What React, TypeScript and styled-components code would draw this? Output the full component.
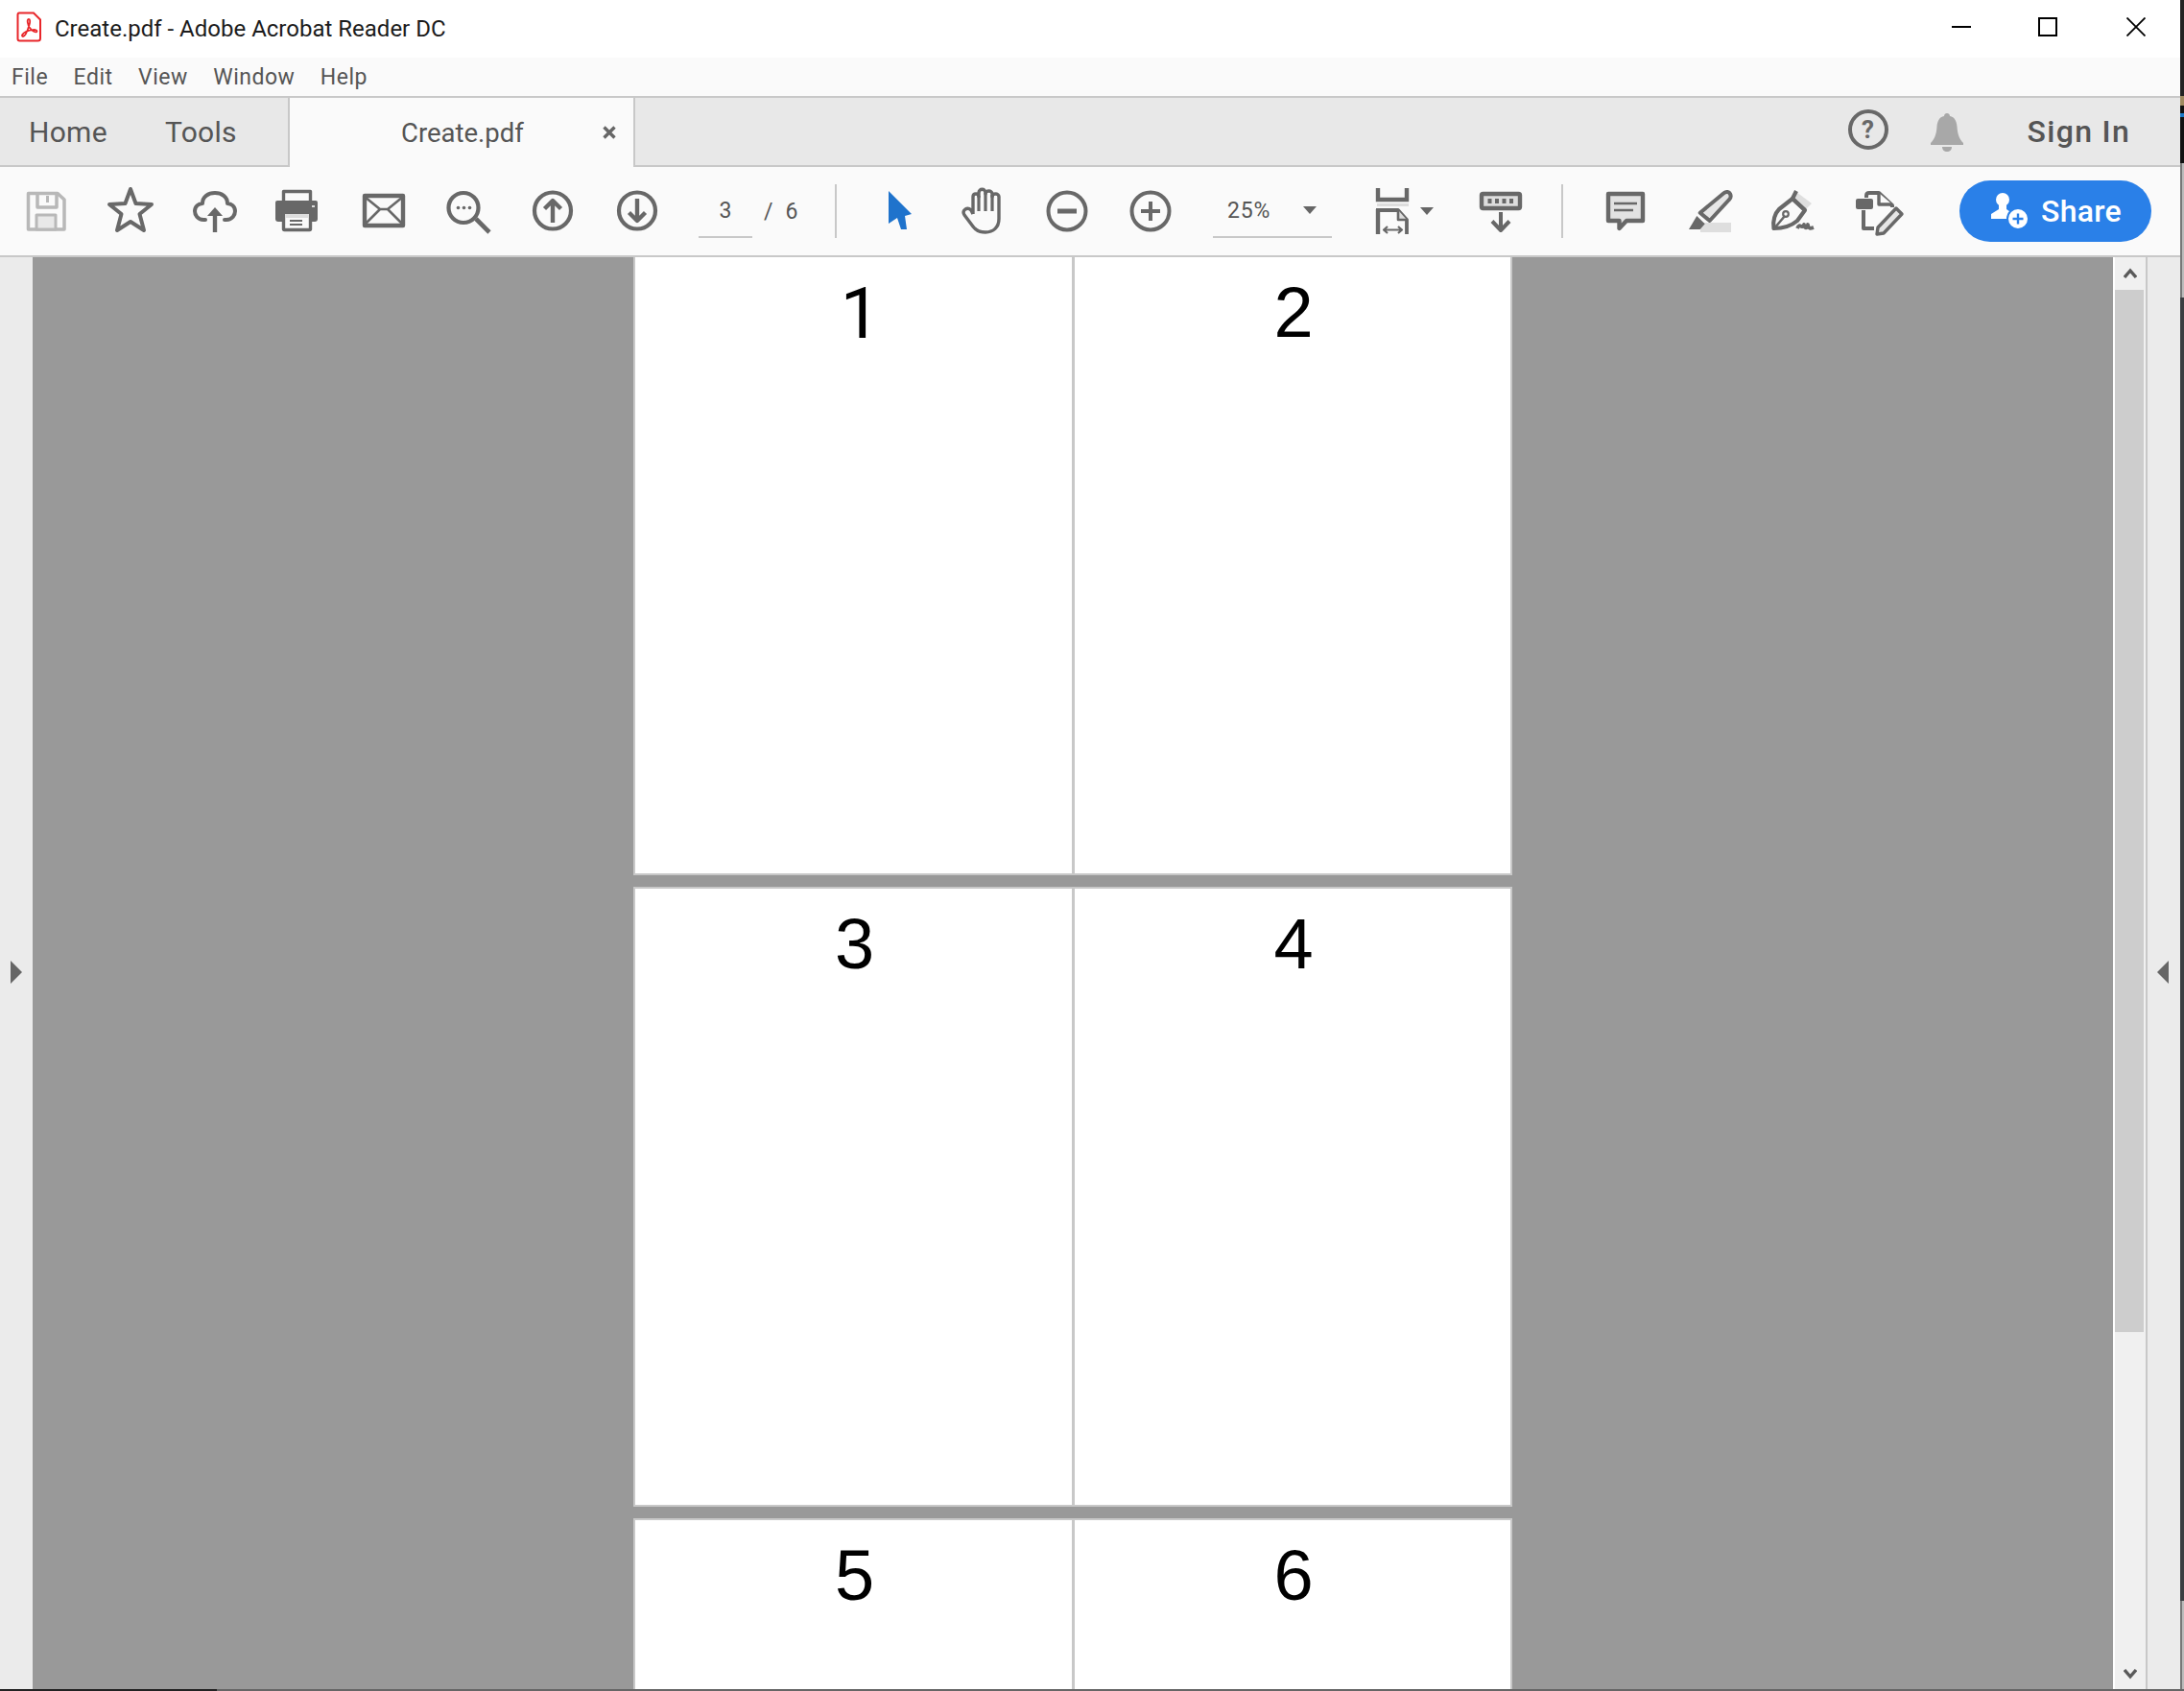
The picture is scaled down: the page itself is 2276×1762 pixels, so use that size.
import React from "react";
import styled, { createGlobalStyle } from "styled-components";

const Global = createGlobalStyle`
  html, body { margin: 0; padding: 0; background: #fff; }
  * { box-sizing: border-box; }
`;

const FONT = `Roboto, "Liberation Sans", sans-serif`;
const ICON = "#686868";

const Screen = styled.div`
  width: 2276px;
  height: 1762px;
  display: flex;
  flex-direction: column;
  overflow: hidden;
  font-family: ${FONT};
`;
const WindowRow = styled.div`
  flex: 1;
  min-height: 0;
  display: flex;
`;
const Main = styled.div`
  width: 2272px;
  display: flex;
  flex-direction: column;
`;
const EdgeStrip = styled.div`
  width: 4px;
  display: flex;
  flex-direction: column;
`;
const EdgeSegment = styled.div<{ $h?: number; $bg: string }>`
  height: ${(p) => (p.$h ? `${p.$h}px` : "auto")};
  flex: ${(p) => (p.$h ? "none" : 1)};
  background: ${(p) => p.$bg};
`;
const BottomLine = styled.div`
  height: 2px;
  flex: none;
  display: flex;
  background: #666;
`;
const BottomDark = styled.div`
  width: 226px;
  background: #222;
`;

const TitleBar = styled.div`
  height: 60px;
  flex: none;
  display: flex;
  align-items: center;
  background: #fff;
  padding-left: 16px;
`;
const LogoSlot = styled.div`
  display: flex;
  margin-bottom: 5px;
`;
const AppTitle = styled.div`
  flex: 1;
  margin-left: 11px;
  font-size: 24px;
  color: #1c1c1c;
`;
const WinButton = styled.div<{ $w: number }>`
  width: ${(p) => p.$w}px;
  height: 56px;
  margin-bottom: 4px;
  display: flex;
  align-items: center;
  justify-content: center;
`;

const MenuBar = styled.div`
  height: 40px;
  flex: none;
  display: flex;
  align-items: center;
  gap: 26.5px;
  padding-left: 12px;
  background: #fafafa;
`;
const MenuItem = styled.span`
  font-size: 23px;
  letter-spacing: 0.5px;
  color: #555;
`;

const TabBar = styled.div`
  height: 74px;
  flex: none;
  display: flex;
  background: #e8e8e8;
  border-top: 2px solid #c8c8c8;
  border-bottom: 2px solid #c8c8c8;
`;
const NavTabs = styled.div`
  width: 300px;
  display: flex;
  align-items: center;
  gap: 60px;
  padding-left: 30px;
`;
const NavTab = styled.span`
  font-size: 30px;
  letter-spacing: 0.3px;
  color: #555;
`;
const DocTab = styled.div`
  width: 362px;
  height: 72px;
  flex: none;
  display: flex;
  align-items: center;
  padding-left: 116px;
  background: #fafafa;
  border-left: 2px solid #c8c8c8;
  border-right: 2px solid #c8c8c8;
`;
const DocTabName = styled.span`
  width: 210px;
  font-size: 27.5px;
  color: #555;
`;
const TabSpacer = styled.div`
  flex: 1;
`;
const HelpBadge = styled.div`
  width: 42px;
  height: 42px;
  margin-top: 12px;
  border: 4px solid ${ICON};
  border-radius: 50%;
  display: flex;
  align-items: center;
  justify-content: center;
  font-size: 26px;
  font-weight: 700;
  color: ${ICON};
`;
const BellSlot = styled.div`
  margin: 14px 0 0 43px;
`;
const SignIn = styled.span`
  margin: 0 52px 0 66px;
  align-self: center;
  font-size: 32px;
  font-weight: 500;
  letter-spacing: 1.3px;
  color: #555;
`;

const Toolbar = styled.div`
  height: 94px;
  flex: none;
  display: flex;
  align-items: center;
  padding-left: 4px;
  background: #fafafa;
  border-bottom: 2px solid #c8c8c8;
`;
const Slot = styled.div<{ $w?: number; $ml?: number }>`
  width: ${(p) => p.$w ?? 88}px;
  margin-left: ${(p) => p.$ml ?? 0}px;
  flex: none;
  display: flex;
  align-items: center;
  justify-content: center;
`;
const PageField = styled.div`
  width: 162px;
  height: 56px;
  flex: none;
  display: flex;
  align-items: center;
  padding-left: 20px;
  font-size: 23px;
  color: #555;
`;
const PageInput = styled.div`
  width: 56px;
  height: 56px;
  padding-top: 1px;
  display: flex;
  align-items: center;
  justify-content: center;
  border-bottom: 2px solid #c8c8c8;
`;
const PageSlash = styled.span`
  margin-left: 12px;
`;
const PageTotal = styled.span`
  margin-left: 13px;
`;
const ToolDivider = styled.div<{ $ml?: number }>`
  width: 2px;
  height: 56px;
  flex: none;
  margin-left: ${(p) => p.$ml ?? 0}px;
  background: #c8c8c8;
`;
const ZoomBox = styled.div`
  width: 124px;
  height: 56px;
  flex: none;
  margin-left: 22px;
  display: flex;
  align-items: center;
  padding-left: 15px;
  font-size: 23px;
  color: #555;
  border-bottom: 2px solid #c8c8c8;
`;
const ZoomValue = styled.span`
  width: 79px;
  letter-spacing: 0.8px;
`;
const Caret = styled.span`
  width: 0;
  height: 0;
  flex: none;
  border-left: 7px solid transparent;
  border-right: 7px solid transparent;
  border-top: 8px solid #666;
`;
const FitGroup = styled.div`
  width: 88px;
  flex: none;
  margin-left: 44px;
  display: flex;
  align-items: center;
  gap: 8px;
`;
const ShareButton = styled.div`
  width: 200px;
  height: 64px;
  flex: none;
  margin-left: 38px;
  display: flex;
  align-items: center;
  padding-left: 32px;
  border-radius: 32px;
  background: #2a80e8;
  color: #fff;
  font-size: 32px;
  font-weight: 500;
`;
const ShareLabel = styled.span`
  margin-left: 11px;
  letter-spacing: 0.3px;
`;

const Workspace = styled.div`
  flex: 1;
  min-height: 0;
  display: flex;
`;
const SidePanel = styled.div<{ $w: number; $inset: number }>`
  width: ${(p) => p.$w}px;
  flex: none;
  display: flex;
  align-items: flex-start;
  justify-content: center;
  padding: 733px ${(p) => p.$inset}px 0 0;
  background: #ebebeb;
`;
const Canvas = styled.div`
  flex: 1;
  min-width: 0;
  overflow: hidden;
  display: flex;
  flex-direction: column;
  align-items: center;
  gap: 12px;
  background: #999;
`;
const Sheet = styled.div<{ $h: number; $first?: boolean; $last?: boolean }>`
  width: 916px;
  height: ${(p) => p.$h}px;
  flex: none;
  display: grid;
  grid-template-columns: 455px 1fr;
  background: #fff;
  border: 2px solid #c8c8c8;
  border-top-width: ${(p) => (p.$first ? 0 : 2)}px;
  border-bottom-width: ${(p) => (p.$last ? 0 : 2)}px;
`;
const Cell = styled.div<{ $divider?: boolean; $plain?: boolean }>`
  padding-top: ${(p) => (p.$plain ? 22 : 21)}px;
  padding-left: ${(p) => (p.$plain ? 14 : 2)}px;
  text-align: center;
  font-family: ${(p) => (p.$plain ? "Roboto, sans-serif" : `"Liberation Sans", Arial, sans-serif`)};
  font-size: 74px;
  line-height: 1;
  color: #000;
  border-left: ${(p) => (p.$divider ? "3px solid #c8c8c8" : "0")};
`;

const Scrollbar = styled.div`
  width: 36px;
  flex: none;
  display: flex;
  flex-direction: column;
  background: #f0f0f0;
  border-left: 2px solid #fff;
  border-right: 2px solid #c8c8c8;
`;
const ScrollArrow = styled.div<{ $h: number }>`
  height: ${(p) => p.$h}px;
  flex: none;
  display: flex;
  align-items: center;
  justify-content: center;
`;
const ScrollThumb = styled.div`
  width: 30px;
  height: 1086px;
  flex: none;
  background: #cdcdcd;
`;
const ScrollGap = styled.div`
  flex: 1;
`;

const Svg = ({ children, w = 56, h = 56 }: { children: React.ReactNode; w?: number; h?: number }) => (
  <svg width={w} height={h} viewBox={`0 0 ${w} ${h}`} fill="none" strokeLinejoin="round">
    {children}
  </svg>
);

const PdfLogo = () => (
  <svg width="30" height="34" viewBox="0 0 30 34" fill="none">
    <path d="M4 2.5 H19 L26 9.5 V29 Q26 31.5 23.5 31.5 H4.5 Q2.5 31.5 2.5 29.5 V4.5 Q2.5 2.5 4 2.5 Z" fill="#fff" stroke="#e8262a" strokeWidth="2" />
    <path d="M14 9 C11.5 9 13 15 15 18 C17 21 22 24 22.5 21.5 C23 19 15 20 11 22 C7 24 6 27 8 27 C10.5 27 13 20 14.5 15 C15.5 12 15.5 9 14 9 Z" stroke="#e8262a" strokeWidth="1.8" />
  </svg>
);

const SaveIcon = () => (
  <Svg>
    <path d="M9.5 9.5 H40 L47 16 V47 H9.5 Z" stroke="#b8b8b8" strokeWidth="3.5" />
    <path d="M19 9 V24 H39 V9" stroke="#b8b8b8" strokeWidth="3.5" />
    <rect x="28" y="12" width="3" height="7" fill="#b8b8b8" />
    <rect x="18" y="32" width="20" height="15" fill="#e8e8e8" stroke="#b8b8b8" strokeWidth="3" />
  </Svg>
);
const StarIcon = () => (
  <Svg>
    <path d="M28 5 L33.5 20 L50 21 L37.5 31 L42 48 L28 39 L14 48 L18.5 31 L6 21 L22.5 20 Z" stroke={ICON} strokeWidth="4" />
  </Svg>
);
const CloudIcon = () => (
  <Svg>
    <path d="M18 37 H16 C10 37 7 32 7 28 C7 23 11 20 15 20 C15 13 21 9 28 9 C35 9 41 13 41 20 C45 20 49 23 49 28 C49 32 46 37 40 37 H38" stroke={ICON} strokeWidth="4" strokeLinecap="round" />
    <path d="M28 50 V27" stroke={ICON} strokeWidth="4.4" />
    <path d="M20 33 L28 24 L36 33 Z" fill={ICON} />
  </Svg>
);
const PrinterIcon = () => (
  <Svg>
    <rect x="3" y="18" width="44" height="21" rx="3" fill={ICON} />
    <rect x="11.5" y="7.5" width="28" height="14" fill="#fafafa" stroke={ICON} strokeWidth="3.4" />
    <rect x="3" y="17" width="44" height="8" rx="2" fill={ICON} />
    <rect x="41" y="22" width="3" height="2" fill="#ddd" />
    <rect x="11.5" y="29.5" width="28" height="18" rx="1" fill="#fafafa" stroke={ICON} strokeWidth="3.4" />
    <rect x="13" y="31" width="25" height="4" fill="#ddd" />
    <path d="M18 38 H31 M18 42 H31" stroke={ICON} strokeWidth="2" />
  </Svg>
);
const MailIcon = () => (
  <Svg>
    <rect x="8" y="12" width="40" height="31" stroke={ICON} strokeWidth="4.4" />
    <path d="M8 13 L24 26 H32 L48 13 M8 42 L24 26 M48 42 L32 26" stroke={ICON} strokeWidth="2.6" />
  </Svg>
);
const SearchIcon = () => (
  <Svg>
    <circle cx="23" cy="24.5" r="15.5" stroke={ICON} strokeWidth="4.2" />
    <path d="M36 36 L50 50" stroke={ICON} strokeWidth="4.6" />
    <circle cx="17.5" cy="24.5" r="1.8" fill={ICON} />
    <circle cx="23.5" cy="24.5" r="1.8" fill={ICON} />
    <circle cx="29.5" cy="24.5" r="1.8" fill={ICON} />
  </Svg>
);
const UpIcon = () => (
  <Svg>
    <circle cx="28" cy="27.5" r="19" stroke={ICON} strokeWidth="4.2" />
    <path d="M28 40 V17 M19.5 25.5 L28 17 L36.5 25.5" stroke={ICON} strokeWidth="4.4" />
  </Svg>
);
const DownIcon = () => (
  <Svg>
    <circle cx="28" cy="27.5" r="19" stroke={ICON} strokeWidth="4.2" />
    <path d="M28 15 V38 M19.5 29.5 L28 38 L36.5 29.5" stroke={ICON} strokeWidth="4.4" />
  </Svg>
);
const CursorIcon = () => (
  <Svg>
    <path d="M16 7 L40 31 L33 33 L35 47 L29 47 L25 35 L16 41 Z" fill="#1f73cc" />
  </Svg>
);
const HandIcon = () => (
  <Svg>
    <path d="M17 31 V13 C17 9 23 9 23 13 V9 C23 4 30 4 30 9 V10 C30 6 37 6 37 10 V13 C37 9 44 9 44 13 V36 C44 45 38 50 30 50 C24 50 20 48 17 44 L8 32 C5 27 11 23 15 27 L17 31" stroke={ICON} strokeWidth="3.4" />
    <path d="M23 12 V28 M30 9 V28 M37 11 V28" stroke={ICON} strokeWidth="3.2" />
  </Svg>
);
const MinusIcon = () => (
  <Svg>
    <circle cx="28" cy="28" r="19.5" stroke={ICON} strokeWidth="4" />
    <path d="M18 28 H38" stroke={ICON} strokeWidth="5" />
  </Svg>
);
const PlusIcon = () => (
  <Svg>
    <circle cx="28" cy="28" r="19.5" stroke={ICON} strokeWidth="4" />
    <path d="M18 28 H38 M28 18 V38" stroke={ICON} strokeWidth="4" />
  </Svg>
);
const FitIcon = () => (
  <Svg w={40}>
    <path d="M4 4 V16 H34 V4" stroke={ICON} strokeWidth="4.4" strokeLinejoin="miter" />
    <rect x="3" y="20" width="33" height="3" fill="#ddd" />
    <path d="M4 26 V52" stroke={ICON} strokeWidth="4.4" />
    <path d="M2 27 H25 L34 37 V52" stroke={ICON} strokeWidth="3.8" />
    <path d="M25 27 V37 H34" fill="#ddd" stroke={ICON} strokeWidth="2.6" />
    <path d="M10 47.5 H29 M14 44 L10 47.5 L14 51 M25 44 L29 47.5 L25 51" stroke={ICON} strokeWidth="2.2" />
  </Svg>
);
const StampIcon = () => (
  <Svg>
    <rect x="8" y="10" width="40" height="15" rx="1.5" fill="#ddd" stroke={ICON} strokeWidth="4.4" />
    <rect x="14.5" y="15" width="4" height="5" fill={ICON} />
    <rect x="22" y="15" width="4" height="5" fill={ICON} />
    <rect x="29.5" y="15" width="4" height="5" fill={ICON} />
    <rect x="37" y="15" width="4" height="5" fill={ICON} />
    <path d="M28 29 V48 M19 38.5 L28 48 L37 38.5" stroke={ICON} strokeWidth="4" />
  </Svg>
);
const CommentIcon = () => (
  <Svg>
    <path d="M10 10 H46 V38 H29 L21.5 46 V38 H10 Z" fill="#e2e2e2" stroke={ICON} strokeWidth="4.4" />
    <path d="M16 20 H40 M16 27 H36" stroke={ICON} strokeWidth="2.6" />
  </Svg>
);
const HighlightIcon = () => (
  <Svg>
    <rect x="18" y="40" width="32" height="10" fill="#dedede" />
    <path d="M42.7 9 C45 7 48 8 49 10 C50 12 50 14 48 16 L27.7 38 L17.7 29.7 Z" fill="#e6e6e6" stroke={ICON} strokeWidth="4" />
    <path d="M14.3 33 L22.7 41.3 L17.7 47 H6 Z" fill={ICON} />
  </Svg>
);
const PenIcon = () => (
  <Svg>
    <path d="M31 8 L47 20 L40 27 L26 15 Z" fill="#dedede" />
    <path d="M31 7 L27 15 M40 27 L27 15" stroke={ICON} strokeWidth="4.2" />
    <path d="M7.5 46 C6 38 9 30 13 26 L27 15 L40 27 L32 38 C25 44 15 46 7.5 46 Z" stroke={ICON} strokeWidth="4.2" />
    <path d="M8 46 L19 33" stroke={ICON} strokeWidth="2.6" />
    <circle cx="20" cy="31" r="2.8" stroke={ICON} strokeWidth="2.2" />
    <path d="M32 46 C35 39 36 48 39 42 C40 47 42 46 43 42 C44 47 46 46 49 45" stroke={ICON} strokeWidth="3.8" />
  </Svg>
);
const DocEditIcon = () => (
  <Svg>
    <path d="M15 14 V12 Q15 9 18 9 H28 L42 22 V24" stroke={ICON} strokeWidth="4" />
    <path d="M28 9 V21 H42" fill="#fafafa" stroke={ICON} strokeWidth="3.4" />
    <rect x="4" y="15" width="18" height="11" rx="2" fill={ICON} />
    <path d="M12 27 V46 H23" stroke={ICON} strokeWidth="4" />
    <path d="M46 25 L52 31 L33 51 L26 52 L27 45 Z" fill="#e6e6e6" stroke={ICON} strokeWidth="3.4" />
  </Svg>
);
const BellIcon = () => (
  <svg width="36" height="42" viewBox="0 0 36 42" fill="#a8a8a8">
    <path d="M15 5 C15 1 21 1 21 5 C26 6 28 10 28.5 16 C29 24 31 29 35 33 V35 H1 V33 C5 29 7 24 7.5 16 C8 10 10 6 15 5 Z" />
    <path d="M13 37 H23 C23 40 21 42 18 42 C15 42 13 40 13 37 Z" />
  </svg>
);
const ShareUserIcon = () => (
  <svg width="42" height="42" viewBox="0 0 42 42">
    <circle cx="13" cy="9" r="7" fill="#fff" />
    <path d="M9 14 H17 V19 L24 24 V29 H1 V24 L9 19 Z" fill="#fff" />
    <circle cx="29" cy="29" r="11" fill="#fff" stroke="#2a80e8" strokeWidth="2" />
    <path d="M23.5 29 H34.5 M29 23.5 V34.5" stroke="#2a80e8" strokeWidth="2.4" />
  </svg>
);
const TriangleIcon = ({ dir }: { dir: "left" | "right" }) => (
  <svg width="12" height="24" viewBox="0 0 12 24">
    <path d={dir === "right" ? "M0 0 L12 12 L0 24 Z" : "M12 0 L0 12 L12 24 Z"} fill="#666" />
  </svg>
);
const ChevronIcon = ({ up }: { up?: boolean }) => (
  <svg width="14" height="12" viewBox="0 0 14 12" fill="none">
    <path d={up ? "M1 10 L7 3 L13 10" : "M1 2 L7 9 L13 2"} stroke="#5a5a5a" strokeWidth="3.4" />
  </svg>
);

const pageRows = [
  { h: 644, first: true, nums: ["1", "2"] },
  { h: 646, nums: ["3", "4"] },
  { h: 300, last: true, nums: ["5", "6"] },
];

export default function App() {
  return (
    <Screen>
      <Global />
      <WindowRow>
        <Main>
          <TitleBar>
            <LogoSlot><PdfLogo /></LogoSlot>
            <AppTitle>Create.pdf - Adobe Acrobat Reader DC</AppTitle>
            <WinButton $w={88}>
              <svg width="20" height="2"><rect width="20" height="2" fill="#000" /></svg>
            </WinButton>
            <WinButton $w={92}>
              <svg width="20" height="20" fill="none"><rect x="1" y="1" width="18" height="18" stroke="#000" strokeWidth="2" /></svg>
            </WinButton>
            <WinButton $w={92}>
              <svg width="20" height="20" fill="none"><path d="M0.5 0.5 L19.5 19.5 M19.5 0.5 L0.5 19.5" stroke="#000" strokeWidth="1.8" /></svg>
            </WinButton>
          </TitleBar>
          <MenuBar>
            {["File", "Edit", "View", "Window", "Help"].map((m) => (
              <MenuItem key={m}>{m}</MenuItem>
            ))}
          </MenuBar>
          <TabBar>
            <NavTabs>
              <NavTab>Home</NavTab>
              <NavTab>Tools</NavTab>
            </NavTabs>
            <DocTab>
              <DocTabName>Create.pdf</DocTabName>
              <svg width="14" height="14" fill="none"><path d="M1.5 1.5 L12.5 12.5 M12.5 1.5 L1.5 12.5" stroke="#666" strokeWidth="3.4" /></svg>
            </DocTab>
            <TabSpacer />
            <HelpBadge>?</HelpBadge>
            <BellSlot><BellIcon /></BellSlot>
            <SignIn>Sign In</SignIn>
          </TabBar>
          <Toolbar>
            <Slot><SaveIcon /></Slot>
            <Slot><StarIcon /></Slot>
            <Slot><CloudIcon /></Slot>
            <Slot><PrinterIcon /></Slot>
            <Slot><MailIcon /></Slot>
            <Slot><SearchIcon /></Slot>
            <Slot><UpIcon /></Slot>
            <Slot><DownIcon /></Slot>
            <PageField>
              <PageInput>3</PageInput>
              <PageSlash>/</PageSlash>
              <PageTotal>6</PageTotal>
            </PageField>
            <ToolDivider />
            <Slot $ml={22}><CursorIcon /></Slot>
            <Slot $w={86}><HandIcon /></Slot>
            <Slot $w={88}><MinusIcon /></Slot>
            <Slot $w={86}><PlusIcon /></Slot>
            <ZoomBox>
              <ZoomValue>25%</ZoomValue>
              <Caret />
            </ZoomBox>
            <FitGroup>
              <FitIcon />
              <Caret />
            </FitGroup>
            <Slot><StampIcon /></Slot>
            <ToolDivider $ml={19} />
            <Slot $ml={21}><CommentIcon /></Slot>
            <Slot><HighlightIcon /></Slot>
            <Slot $w={86}><PenIcon /></Slot>
            <Slot $w={92}><DocEditIcon /></Slot>
            <ShareButton>
              <ShareUserIcon />
              <ShareLabel>Share</ShareLabel>
            </ShareButton>
          </Toolbar>
          <Workspace>
            <SidePanel $w={34} $inset={1}><TriangleIcon dir="right" /></SidePanel>
            <Canvas>
              {pageRows.map((r) => (
                <Sheet key={r.nums[0]} $h={r.h} $first={r.first} $last={r.last}>
                  <Cell $plain={r.nums[0] === "1"}>{r.nums[0]}</Cell>
                  <Cell $divider>{r.nums[1]}</Cell>
                </Sheet>
              ))}
            </Canvas>
            <Scrollbar>
              <ScrollArrow $h={34}><ChevronIcon up /></ScrollArrow>
              <ScrollThumb />
              <ScrollGap />
              <ScrollArrow $h={32}><ChevronIcon /></ScrollArrow>
            </Scrollbar>
            <SidePanel $w={34} $inset={3}><TriangleIcon dir="left" /></SidePanel>
          </Workspace>
        </Main>
        <EdgeStrip>
          <EdgeSegment $h={100} $bg="#222" />
          <EdgeSegment $h={10} $bg="#a08a60" />
          <EdgeSegment $h={8} $bg="#111" />
          <EdgeSegment $h={4} $bg="#1a78c8" />
          <EdgeSegment $h={48} $bg="#111" />
          <EdgeSegment $h={140} $bg="linear-gradient(90deg,#777 50%,#bbb 50%)" />
          <EdgeSegment $h={1358} $bg="#3a3d40" />
          <EdgeSegment $bg="linear-gradient(90deg,#777 50%,#bbb 50%)" />
        </EdgeStrip>
      </WindowRow>
      <BottomLine><BottomDark /></BottomLine>
    </Screen>
  );
}
